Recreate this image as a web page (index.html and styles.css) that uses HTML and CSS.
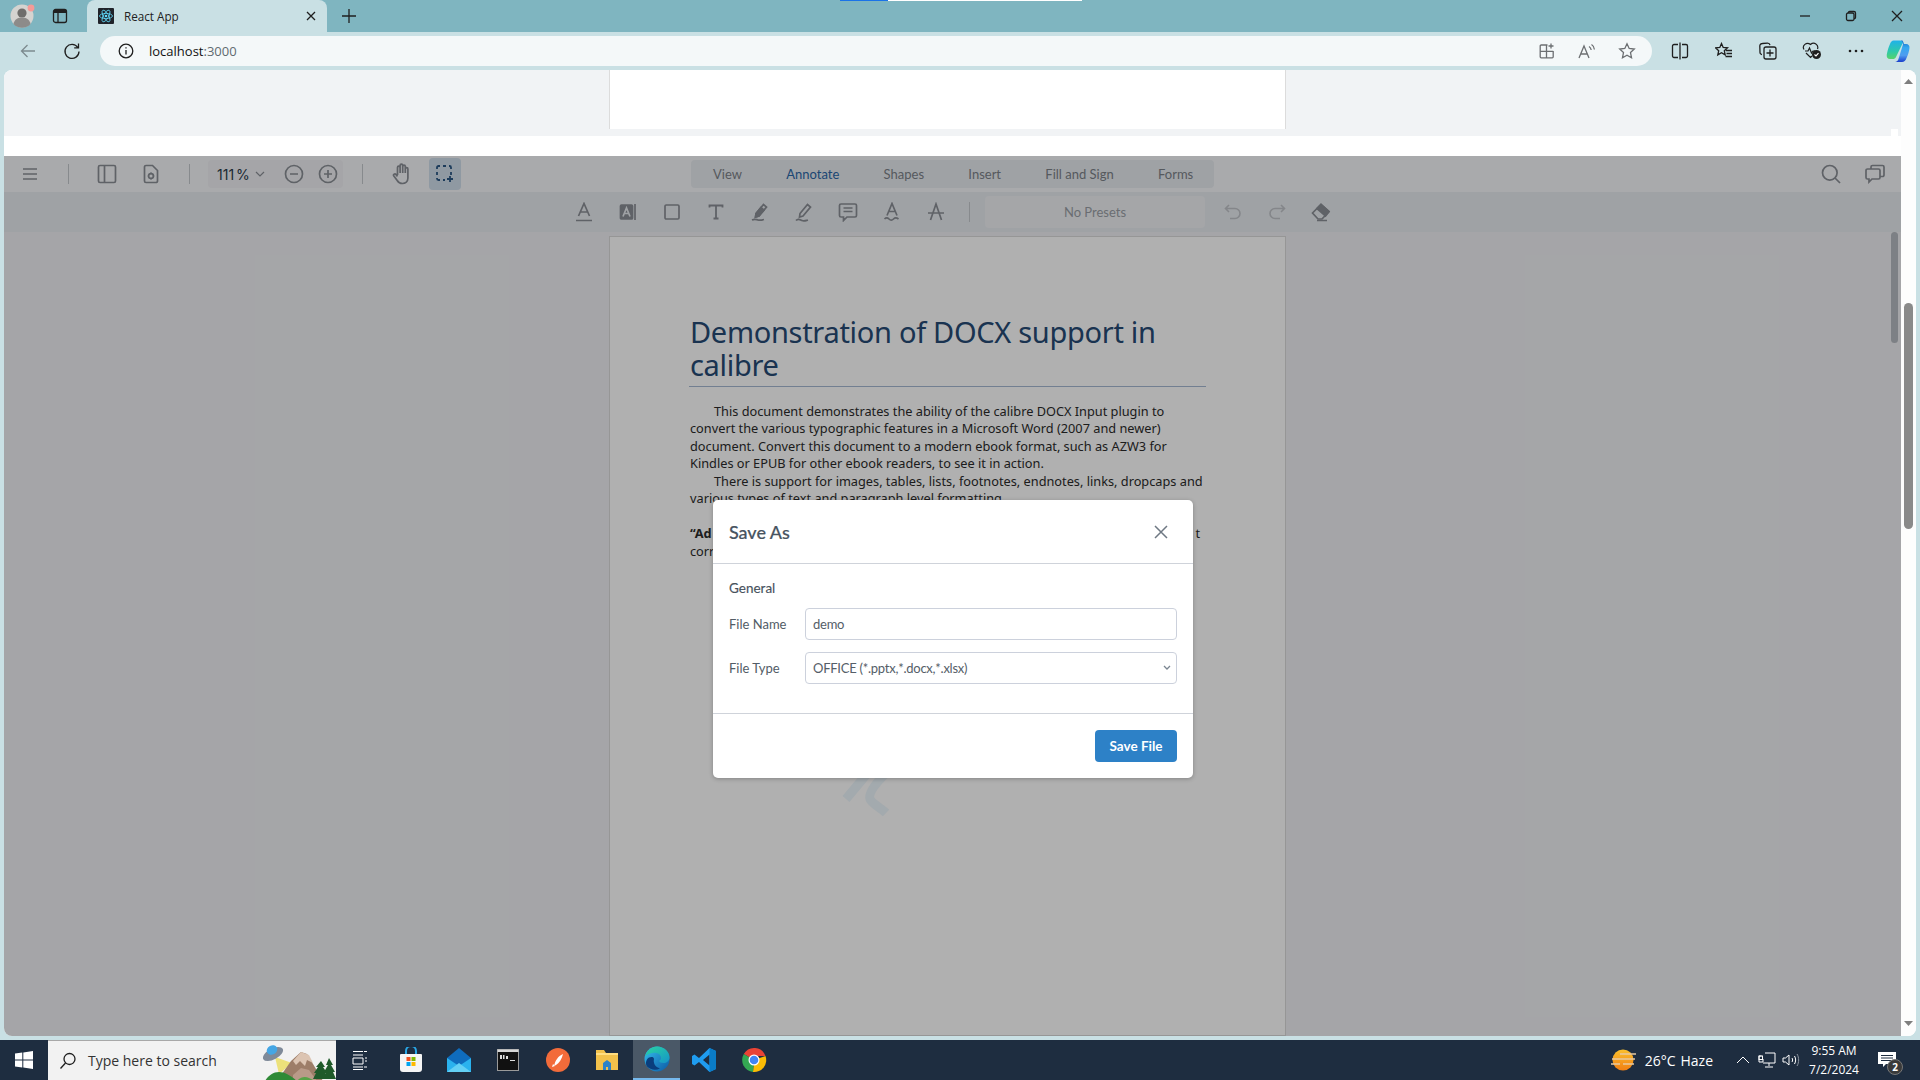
FILE: index.html
```html
<!DOCTYPE html>
<html lang="en">
<head>
<meta charset="utf-8">
<title>React App</title>
<link rel="stylesheet" href="styles.css">
</head>
<body>
<div class="capture"><span class="cap-blue"></span><span class="cap-white"></span></div>
<header class="tabbar">
  <div class="cell w44">
    <svg width="26" height="26" viewBox="0 0 26 26"><circle cx="13" cy="13" r="11.500" fill="#d5d3d0"/><circle cx="13" cy="10" r="4.600" fill="#6f6d6b"/><path d="M4.500 21c1-5 4.500-6.500 8.500-6.500s7.500 1.500 8.500 6.500c-2 2.500-5 3.800-8.500 3.800S6.500 23.500 4.500 21z" fill="#8d8b89"/><circle cx="22" cy="5" r="3.400" fill="#f59a97"/></svg>
  </div>
  <div class="cell w32">
    <svg class="ic dark" width="16" height="16" viewBox="0 0 16 16"><rect x="1.500" y="1.500" width="13" height="13" rx="2"/><path d="M6 5v9.500"/><path d="M2 2h12v3H2z" class="solid"/></svg>
  </div>
  <div class="tab">
    <svg class="favicon" width="16" height="16" viewBox="0 0 16 16"><rect width="16" height="16" rx="1" fill="#20232a"/><g fill="none" stroke="#61dafb" stroke-width=".8"><ellipse cx="8" cy="8" rx="6.500" ry="2.600"/><ellipse cx="8" cy="8" rx="6.500" ry="2.600" transform="rotate(60 8 8)"/><ellipse cx="8" cy="8" rx="6.500" ry="2.600" transform="rotate(120 8 8)"/></g><circle cx="8" cy="8" r="1.300" fill="#61dafb"/></svg>
    <span class="tab-title">React App</span>
    <svg class="ic dark tab-x" width="12" height="12" viewBox="0 0 12 12"><path d="M2 2l8 8M10 2l-8 8"/></svg>
  </div>
  <div class="cell w44">
    <svg class="ic dark" width="16" height="16" viewBox="0 0 16 16"><path d="M8 1v14M1 8h14"/></svg>
  </div>
  <div class="grow"></div>
  <div class="cell w46"><svg class="ic dark" width="12" height="12" viewBox="0 0 12 12"><path d="M1 6h10"/></svg></div>
  <div class="cell w46"><svg class="ic dark" width="12" height="12" viewBox="0 0 12 12"><rect x="1.500" y="3" width="7.500" height="7.500" rx="1.500"/><path d="M3.500 3V2.500a1 1 0 0 1 1-1H9a1.500 1.500 0 0 1 1.500 1.500v4.500a1 1 0 0 1-1 1H9"/></svg></div>
  <div class="cell w46"><svg class="ic dark" width="12" height="12" viewBox="0 0 12 12"><path d="M1 1l10 10M11 1L1 11"/></svg></div>
</header>

<nav class="urlbar">
  <div class="cell w44"><svg class="ic grey" width="18" height="18" viewBox="0 0 18 18"><path d="M16 9H2.500M8.500 3L2.500 9l6 6"/></svg></div>
  <div class="cell w44"><svg class="ic dark" width="18" height="18" viewBox="0 0 18 18"><path d="M14.800 5.500A7 7 0 1 0 16 9.500M15.500 1.500v4.300h-4.300"/></svg></div>
  <div class="address">
    <div class="cell w26"><svg class="ic dark" width="16" height="16" viewBox="0 0 16 16"><circle cx="8" cy="8" r="6.800"/><path d="M8 7v4.500M8 4.300v1.200"/></svg></div>
    <span class="url">localhost<span class="url-port">:3000</span></span>
    <div class="grow"></div>
    <div class="cell w40"><svg class="ic mid" width="16" height="16" viewBox="0 0 16 16"><path d="M8.500 2H2.200a1 1 0 0 0-1 1v10.800a1 1 0 0 0 1 1h11a1 1 0 0 0 1-1V8M1.200 8.300h13M7.500 2v12.800M12 .5v5M9.500 3h5"/></svg></div>
    <div class="cell w40"><svg class="ic mid" width="18" height="16" viewBox="0 0 18 16"><path d="M1 15L6 3l5 12M2.800 11h6.400M11 3.500c1.300.8 2 2 2.200 3.500M13.500 1.500c1.700 1 2.700 2.800 2.900 5"/></svg></div>
    <div class="cell w40"><svg class="ic mid" width="18" height="18" viewBox="0 0 18 18"><path d="M9 1.800l2.200 4.700 5.100.6-3.800 3.500 1 5.100L9 13.200l-4.500 2.500 1-5.100L1.700 7.100l5.100-.6z"/></svg></div>
  </div>
  <div class="cell w44"><svg class="ic dark" width="18" height="18" viewBox="0 0 18 18"><path d="M7 2.500H3a1.500 1.500 0 0 0-1.500 1.500v10A1.500 1.500 0 0 0 3 15.500h4M11 2.500h4A1.500 1.500 0 0 1 16.500 4v10a1.500 1.500 0 0 1-1.500 1.500h-4M9 .5v17"/></svg></div>
  <div class="cell w44"><svg class="ic dark" width="18" height="18" viewBox="0 0 18 18"><path d="M6.500 1.500l1.700 3.900 4.300.4-3.200 2.900.9 4.200-3.700-2.200-3.700 2.200.9-4.200L.5 5.800l4.300-.4zM11 8.500h6M11.500 11.500h5.500M10.500 14.500h6.500"/></svg></div>
  <div class="cell w44"><svg class="ic dark" width="18" height="18" viewBox="0 0 18 18"><path d="M3 12.500a2 2 0 0 1-2-2L.8 4a2.500 2.500 0 0 1 2.500-2.500l5.200-.3a2.500 2.500 0 0 1 2.500 2M7 5h8a2 2 0 0 1 2 2v8a2 2 0 0 1-2 2H7a2 2 0 0 1-2-2V7a2 2 0 0 1 2-2zM11 7.500v7M7.500 11h7"/></svg></div>
  <div class="cell w44"><svg width="20" height="18" viewBox="0 0 20 18"><path class="ic-line" d="M2 7.500C-.3 3.500 4.500-.5 8.500 2.500c3.500-3 8.500 0 7 4.500M3 9h3l1.500-3 2 5 1.500-2h2M4 11l4.500 4.500 1.500-1.500"/><circle cx="14.500" cy="12.500" r="4.500" fill="#1f1f1f"/><path class="ic-white" d="M12.500 12.500l1.500 1.500 2.500-2.800"/></svg></div>
  <div class="cell w44"><svg width="16" height="4" viewBox="0 0 16 4" fill="#1f1f1f"><circle cx="2" cy="2" r="1.300"/><circle cx="8" cy="2" r="1.300"/><circle cx="14" cy="2" r="1.300"/></svg></div>
  <div class="cell w40"><svg width="24" height="24" viewBox="0 0 24 24"><defs><linearGradient id="cpA" x1="0" y1="0" x2="0" y2="1"><stop offset="0" stop-color="#1fb2ea"/><stop offset=".6" stop-color="#2ec9a8"/><stop offset="1" stop-color="#58d36a"/></linearGradient><linearGradient id="cpB" x1="0" y1="0" x2="0" y2="1"><stop offset="0" stop-color="#1565c8"/><stop offset=".35" stop-color="#35a8ef"/><stop offset=".7" stop-color="#4f9cf0"/><stop offset="1" stop-color="#1a3fcc"/></linearGradient></defs><path d="M7.500 1.500H14c1.500 0 2.500.8 3 2L10 18c-.7 1.500-1.800 2-3 2H4C1.500 20 .3 18 .8 15.500 1.500 12 2.500 8 4 5c.8-2 2-3.500 3.500-3.500z" fill="url(#cpA)"/><path d="M14.500 1c1.500 0 2.500.8 3 2.500l.5 1.500h2c2.500 0 3.800 2 3.500 4-.4 3.500-1.500 7-3 10-.8 2.500-2.500 4-4.500 4H9c1.500 0 2.700-1 3.300-2.500L17 5.500C16.500 3 15.800 1.500 14.500 1z" fill="url(#cpB)"/></svg></div>
</nav>

<div class="frame">
  <main class="app">
    <section class="prev">
      <div class="prev-page"></div>
      <span class="notch"></span>
    </section>
    <div class="band"></div>
    <section class="viewer">
      <div class="tb1">
        <div class="cell w36"><svg class="ic tool" width="16" height="14" viewBox="0 0 16 14"><path d="M1 2h14M1 7h14M1 12h14"/></svg></div>
        <span class="vr vr-a"></span>
        <div class="cell w44 ml16"><svg class="ic tool" width="20" height="20" viewBox="0 0 20 20"><rect x="1.500" y="1.500" width="17" height="17" rx="1.500"/><path d="M7.500 1.500v17"/></svg></div>
        <div class="cell w44"><svg class="ic tool" width="18" height="20" viewBox="0 0 18 20"><path d="M10.500 1.500H4A1.500 1.500 0 0 0 2.500 3v14A1.500 1.500 0 0 0 4 18.500h10a1.500 1.500 0 0 0 1.500-1.500V6.500z"/><circle cx="9" cy="12" r="2.400"/><path d="M9 8.500v1M9 14.500v1M5.800 12h1M11.200 12h1"/></svg></div>
        <span class="vr vr-b"></span>
        <div class="zoomgroup">
          <span class="zoomval">111 %</span>
          <svg class="ic tool thin zoomchev" width="10" height="6" viewBox="0 0 10 6"><path d="M1 1l4 4 4-4"/></svg>
          <svg class="ic tool zoomminus" width="20" height="20" viewBox="0 0 20 20"><circle cx="10" cy="10" r="8.500"/><path d="M6 10h8"/></svg>
          <svg class="ic tool zoomplus" width="20" height="20" viewBox="0 0 20 20"><circle cx="10" cy="10" r="8.500"/><path d="M6 10h8M10 6v8"/></svg>
        </div>
        <span class="vr vr-c"></span>
        <div class="cell w32 ml23"><svg class="ic tool" width="20" height="22" viewBox="0 0 20 22"><path d="M5.500 12V4.500a1.300 1.300 0 0 1 2.600 0V10M8.100 9V2.500a1.300 1.300 0 0 1 2.600 0V10M10.700 9.500V3.500a1.300 1.300 0 0 1 2.600 0V10M13.300 10V6a1.300 1.300 0 0 1 2.600 0v9c0 3.500-2.500 5.500-5.500 5.500-2.500 0-4-1-5.200-3L1.700 12.800c-.8-1.300 1.200-2.600 2.200-1.400l1.600 2"/></svg></div>
        <div class="selbox"><svg class="ic sel" width="18" height="18" viewBox="0 0 18 18"><path d="M1 4V2.500A1.500 1.500 0 0 1 2.500 1H4M7 1h3M13 1h.5A1.500 1.500 0 0 1 15 2.500V4M15 7v3M1 7v3M1 13v.5A1.500 1.500 0 0 0 2.500 15H4M7 15h2M14 11v6M11 14h6" stroke-width="1.800"/></svg></div>
        <div class="tabs">
          <span class="tabitem">View</span>
          <span class="tabitem active">Annotate</span>
          <span class="tabitem">Shapes</span>
          <span class="tabitem">Insert</span>
          <span class="tabitem">Fill and Sign</span>
          <span class="tabitem">Forms</span>
        </div>
        <div class="grow"></div>
        <div class="cell w44"><svg class="ic tool" width="20" height="20" viewBox="0 0 20 20"><circle cx="8.800" cy="8.800" r="7.300"/><path d="M14 14l5 5"/></svg></div>
        <div class="cell w44"><svg class="ic tool" width="20" height="20" viewBox="0 0 20 20"><path d="M6 5V3a1.500 1.500 0 0 1 1.500-1.500h10A1.500 1.500 0 0 1 19 3v8a1.500 1.500 0 0 1-1.500 1.500H15"/><path d="M2.500 5h11A1.500 1.500 0 0 1 15 6.500v7a1.500 1.500 0 0 1-1.500 1.500H7l-3 3v-3H2.500A1.500 1.500 0 0 1 1 13.500v-7A1.500 1.500 0 0 1 2.500 5z"/></svg></div>
      </div>
      <div class="tb2">
        <div class="cell w44"><svg class="ic tool" width="18" height="20" viewBox="0 0 18 20"><path d="M3.500 14L9 1.500 14.500 14M5.200 10h7.600"/><path d="M1 18.500h16"/></svg></div>
        <div class="cell w44"><svg class="ic tool" width="18" height="20" viewBox="0 0 18 20"><rect class="toolfill" x="1.500" y="3" width="12" height="14" rx="1"/><path class="ic-cut" d="M4 14.500L7.500 6l3.500 8.500M5.200 11.500h4.600"/><path d="M16 2v16"/></svg></div>
        <div class="cell w44"><svg class="ic tool" width="18" height="18" viewBox="0 0 18 18"><rect x="2" y="2" width="14" height="14" rx="1.200"/></svg></div>
        <div class="cell w44"><svg class="ic tool" width="18" height="18" viewBox="0 0 18 18"><path d="M2.500 4.500V2.500h13v2M9 2.500v13M6.500 15.500h5" stroke-width="1.800"/></svg></div>
        <div class="cell w44"><svg class="ic tool" width="20" height="20" viewBox="0 0 20 20"><path d="M6 11.500L13.500 2.500l3 2.500-7.500 9-3.500 1zM2 18c3-1.500 4-.5 6 0s4 0 6-.5"/><path class="toolfill" d="M6 11.500l5-6 3 2.500-5 6-3.500 1z"/></svg></div>
        <div class="cell w44"><svg class="ic tool" width="20" height="20" viewBox="0 0 20 20"><path d="M6 11.500L13.500 2.500l3 2.500-7.500 9-3.500 1zM2 18.500c2-2.500 4-1 6 0s4 0 6-.5"/></svg></div>
        <div class="cell w44"><svg class="ic tool" width="20" height="20" viewBox="0 0 20 20"><path d="M3 2h14a1.500 1.500 0 0 1 1.500 1.500v10A1.500 1.500 0 0 1 17 15H9l-3.500 3.500V15H3a1.500 1.500 0 0 1-1.500-1.500v-10A1.500 1.500 0 0 1 3 2zM5.500 6h9M5.500 9.500h9"/></svg></div>
        <div class="cell w44"><svg class="ic tool" width="18" height="20" viewBox="0 0 18 20"><path d="M4 13.500L9 1.500l5 12M5.700 9.500h6.600M1.500 17c1.500-1.500 3-1.500 4.500 0s3 1.500 4.500 0 3-1.500 5 0"/></svg></div>
        <div class="cell w44"><svg class="ic tool" width="18" height="20" viewBox="0 0 18 20"><path d="M3.500 18L9 2l5.500 16M1 11h16"/></svg></div>
        <span class="vr vr-d"></span>
        <div class="presets">No Presets</div>
        <div class="cell w44 ml6"><svg class="ic faint" width="18" height="16" viewBox="0 0 18 16"><path d="M5 1L1.500 4.500 5 8M1.500 4.500H11a5 5 0 0 1 0 10H6"/></svg></div>
        <div class="cell w44"><svg class="ic faint" width="18" height="16" viewBox="0 0 18 16"><path d="M13 1l3.500 3.500L13 8M16.500 4.500H7a5 5 0 0 0 0 10h5"/></svg></div>
        <div class="cell w44"><svg class="ic tool" width="20" height="20" viewBox="0 0 20 20"><path d="M1.500 11L10 2.500l8 7-7 7.500H7z"/><path class="toolfill" d="M6 6.500L14.500 14l3.500-4.500-8-7z"/><path d="M6 18.500h10"/></svg></div>
      </div>
      <div class="doc">
        <article class="page">
          <h1 class="doc-title">Demonstration of DOCX support in<br>calibre</h1>
          <div class="doc-rule"></div>
          <div class="doc-text">
            <p class="ln indent">This document demonstrates the ability of the calibre DOCX Input plugin to</p>
            <p class="ln">convert the various typographic features in a Microsoft Word (2007 and newer)</p>
            <p class="ln">document. Convert this document to a modern ebook format, such as AZW3 for</p>
            <p class="ln">Kindles or EPUB for other ebook readers, to see it in action.</p>
            <p class="ln indent">There is support for images, tables, lists, footnotes, endnotes, links, dropcaps and</p>
            <p class="ln">various types of text and paragraph level formatting.</p>
            <p class="ln split gap"><b>“Ad</b><span>t</span></p>
            <p class="ln">corr</p>
          </div>
          <svg class="mark" width="80" height="60" viewBox="0 0 80 60"><path d="M8 34L28 10"/><path d="M48 8C38 18 30 28 32 34c2 5 10 8 16 14"/></svg>
        </article>
        <span class="inner-thumb"></span>
      </div>
      <div class="overlay">
        <div class="modal">
          <div class="modal-head">
            <span class="modal-title">Save As</span>
            <svg class="ic modal-x" width="14" height="14" viewBox="0 0 14 14"><path d="M1 1l12 12M13 1L1 13"/></svg>
          </div>
          <div class="modal-body">
            <div class="sect">General</div>
            <div class="row"><label class="lab">File Name</label><div class="field">demo</div></div>
            <div class="row"><label class="lab">File Type</label><div class="field">OFFICE (*.pptx,*.docx,*.xlsx)<svg class="ic chev" width="8" height="5" viewBox="0 0 8 5"><path d="M1 1l3 3 3-3"/></svg></div></div>
          </div>
          <div class="modal-foot"><button class="save">Save File</button></div>
        </div>
      </div>
    </section>
  </main>
  <aside class="outer-scroll">
    <svg class="arrow" width="9" height="5" viewBox="0 0 9 5"><path d="M4.500 0L9 5H0z"/></svg>
    <span class="outer-track"><span class="outer-thumb"></span></span>
    <svg class="arrow" width="9" height="5" viewBox="0 0 9 5"><path d="M0 0h9L4.500 5z"/></svg>
  </aside>
</div>

<footer class="taskbar">
  <div class="cell w48"><svg width="18" height="18" viewBox="0 0 18 18" fill="#fff"><path d="M0 2.600L7.300 1.500v7H0zM8.300 1.400L18 0v8.500H8.300zM0 9.500h7.300v7L0 15.400zM8.300 9.500H18V18l-9.700-1.400z"/></svg></div>
  <div class="search">
    <svg class="ic dark search-ic" width="18" height="18" viewBox="0 0 18 18"><circle cx="10.500" cy="7" r="5.500"/><path d="M6.500 11L1.500 16.500"/></svg>
    <span class="search-text">Type here to search</span>
    <svg class="scene" width="73" height="40" viewBox="0 0 73 40"><path d="M12 16L16 33 29 22z" fill="#ece17a"/><ellipse cx="10" cy="13" rx="11" ry="5.500" transform="rotate(-28 10 13)" fill="#7f8a99"/><ellipse cx="9" cy="9" rx="5.500" ry="4.500" transform="rotate(-28 9 9)" fill="#45a6e4"/><path d="M14 40L28 20 38 11l6 2 12 20 4 7z" fill="#9d7d68"/><path d="M30 20l8-9 8 3 4 8-6-3-2 6-5-5-4 4z" fill="#dcc4b2"/><path d="M30 34l8-7 8 2 8 11H30z" fill="#b99a88"/><path d="M2 40c3-5 8-9 14-9 6 0 12 4 18 9z" fill="#2f8a36"/><path d="M34 40c3-4 8-5 12-3l6 3z" fill="#57a347"/><path d="M58 20l4 6h-2l4 6h-2l3 6H50l3-6h-2l4-6h-2zM66 17l4 7h-2l4 7h-2l3 7H60l3-7h-2l4-7h-2z" fill="#1f5a2a"/></svg>
  </div>
  <div class="cell w48"><svg class="ic white" width="18" height="20" viewBox="0 0 18 20"><path d="M2 1.500h10M13 1.500h3M2 5h10M2 8h10v6H2zM14 8h2M14 11h2M2 17h10M13 17h3M2 19.500h10"/></svg></div>
  <div class="cell w48 ml3"><svg width="24" height="26" viewBox="0 0 24 26"><path d="M7 7V4a5 5 0 0 1 10 0v3" fill="none" stroke="#29a8e8" stroke-width="2"/><path d="M2 7h20a1 1 0 0 1 1 1v14a3 3 0 0 1-3 3H4a3 3 0 0 1-3-3V8a1 1 0 0 1 1-1z" fill="#f5f5f5"/><rect x="7.500" y="10" width="4" height="4" fill="#f25022"/><rect x="12.500" y="10" width="4" height="4" fill="#7fba00"/><rect x="7.500" y="15" width="4" height="4" fill="#00a4ef"/><rect x="12.500" y="15" width="4" height="4" fill="#ffb900"/></svg></div>
  <div class="cell w48"><svg width="24" height="24" viewBox="0 0 24 24"><path d="M12 0L24 10v14H0V10z" fill="#0f6cbd"/><path d="M0 10l12 8 12-8v14H0z" fill="#2ab2ee"/><path d="M0 24l12-9 12 9z" fill="#63d0f5"/></svg></div>
  <div class="cell w50"><svg width="22" height="22" viewBox="0 0 22 22"><rect x=".5" y=".5" width="21" height="21" fill="#111" stroke="#9a9a9a"/><rect x=".5" y=".5" width="21" height="2.500" fill="#d6d6d6"/><path d="M3 6h2v4H3zM6 6h1.500v4H6zM9 7h2v3H9zM13 11h5v1h-5z" fill="#ddd"/></svg></div>
  <div class="cell w50"><svg width="24" height="24" viewBox="0 0 24 24"><circle cx="12" cy="12" r="12" fill="#f26b3a"/><path d="M8 18c1-5 4-10 9-12-1 5-4 9-7 11zM7 16l-1 3 3-1" fill="#fff"/></svg></div>
  <div class="cell w48"><svg width="24" height="20" viewBox="0 0 24 20"><path d="M1 0h8l2 3h12v17H1z" fill="#f2c14b"/><path d="M1 3h22v2H1z" fill="#ffdd80"/><path d="M8 20v-7l4-3 4 3v7h-3v-3h-2v3z" fill="#2a82c9"/></svg></div>
  <div class="cell tb-on">
    <svg width="26" height="26" viewBox="0 0 26 26"><defs><linearGradient id="edA" x1="0" y1="0" x2="1" y2="1"><stop offset="0" stop-color="#35c1f1"/><stop offset="1" stop-color="#0c59a4"/></linearGradient><linearGradient id="edB" x1="0" y1="0" x2="1" y2="1"><stop offset="0" stop-color="#2ad6a0"/><stop offset="1" stop-color="#1593c9"/></linearGradient></defs><circle cx="13" cy="13" r="12.500" fill="url(#edA)"/><path d="M1 11C3 4 8 .5 13 .5c7 0 12.500 5 12.500 11 0 3.500-3 5.500-6 5.500-2.500 0-4-1-4.500-2 2-1 2.500-3 1.500-5-1.500-3-6-4-10-2.500-3 1-5 2-5.500 3.500z" fill="url(#edB)"/><path d="M10 13c-1 4 1 8 6 9.500-5 2.500-10 1-13-2-2-3-1-7 2-9 2-1 5-1 5 1.500z" fill="#0a3e7d"/></svg>
  </div>
  <div class="cell w48"><svg width="24" height="24" viewBox="0 0 24 24"><path d="M17.500 0L24 3v18l-6.500 3L7 14l-4.500 3.500L0 16V8l2.500-1.500L7 10zM17.500 6.500L11 12l6.500 5.500z" fill="#1f9cf0"/><path d="M17.500 0L24 3v18l-6.500 3z" fill="#0a7cc7"/></svg></div>
  <div class="cell w52"><svg width="26" height="26" viewBox="0 0 26 26"><path d="M13 13L2.800 7A12 12 0 0 1 24.500 9H13z" fill="#ea4335"/><path d="M13 13l11.500-4A12 12 0 0 1 12 25z" fill="#fbbc05"/><path d="M13 13l-1 12A12 12 0 0 1 2.800 7z" fill="#34a853"/><circle cx="13" cy="13" r="5.500" fill="#fff"/><circle cx="13" cy="13" r="4.300" fill="#4285f4"/></svg></div>
  <div class="grow"></div>
  <svg class="sun" width="26" height="22" viewBox="0 0 26 22"><defs><linearGradient id="sunG" x1="0" y1="0" x2="0" y2="1"><stop offset="0" stop-color="#fbc02d"/><stop offset="1" stop-color="#f07f13"/></linearGradient></defs><circle cx="12" cy="11" r="10.500" fill="url(#sunG)"/><path d="M9 5h16M1 10h17M14 10h10M0 15h9M12 15h11" stroke="#e8c9a0" stroke-width="1.600"/></svg>
  <span class="temp">26°C</span>
  <span class="haze">Haze</span>
  <svg class="ic white tray-chev" width="14" height="8" viewBox="0 0 14 8"><path d="M1 7l6-6 6 6"/></svg>
  <svg class="ic white tray-net" width="18" height="16" viewBox="0 0 18 16"><path d="M3.500 4H1v6h4V7M7 1h10v10H5M11 11v3M7 15h8"/><rect x="1" y="4" width="3.500" height="3.500"/></svg>
  <svg class="ic white tray-vol" width="18" height="14" viewBox="0 0 18 14"><path d="M1 5h2.500L7 2v10L3.500 9H1zM10 5c.8 1.200.8 2.800 0 4M12.500 3c1.500 2.500 1.500 5.500 0 8"/><path class="dimline" d="M15 1c2.200 3.500 2.200 8.500 0 12"/></svg>
  <div class="clock"><span>9:55 AM</span><span>7/2/2024</span></div>
  <div class="notif">
    <svg width="18" height="16" viewBox="0 0 18 16" fill="#fff"><path d="M0 0h18v12H8l-3 3v-3H0z"/><path d="M3 3.500h12M3 6h12M3 8.500h12" stroke="#1e2d40"/></svg>
    <span class="badge">2</span>
  </div>
</footer>
</body>
</html>
```

FILE: styles.css
```css
* { box-sizing: border-box; }
html, body { margin: 0; height: 100%; }
body {
  width: 1920px; height: 1080px; overflow: hidden; display: flex; flex-direction: column;
  background: #c9e0e4; font-family: "Open Sans", "Noto Sans", sans-serif; color: #1f1f1f; position: relative;
}
.capture { position: absolute; left: 840px; top: 0; display: flex; height: 1px; z-index: 5; }
.cap-blue { width: 48px; background: #1a73e8; }
.cap-white { width: 194px; background: #fff; }

.cell { display: flex; align-items: center; justify-content: center; flex: none; height: 100%; }
.w26 { width: 26px; } .w32 { width: 32px; } .w36 { width: 36px; } .w40 { width: 40px; }
.w44 { width: 44px; } .w46 { width: 46px; } .w48 { width: 48px; } .w50 { width: 50px; } .w52 { width: 52px; }
.ml3 { margin-left: 3px; } .ml6 { margin-left: 6px; } .ml16 { margin-left: 16px; } .ml23 { margin-left: 23px; }
.grow { flex: 1; }

.ic { fill: none; stroke: currentColor; stroke-width: 1.300; }
.dark { color: #1f1f1f; } .grey { color: #7c8a8e; } .mid { color: #6c6f72; } .white { color: #fff; stroke-width: 1; }
.tool { color: #8a8e95; stroke-width: 1.700; }
.thin { stroke-width: 1.200; }
.faint { color: #bfc3c8; stroke-width: 1.600; }
.sel { color: #2a5785; }
.solid { fill: #1f1f1f; stroke: none; }
.toolfill { fill: #8a8e95; }
.ic-line { fill: none; stroke: #1f1f1f; stroke-width: 1.200; }
.ic-white { fill: none; stroke: #fff; stroke-width: 1.200; }
.ic-cut { stroke: #e7ebef; fill: none; }
.dimline { stroke: #8b94a0; }

.tabbar { height: 32px; background: #7fb5c0; display: flex; flex: none; }
.tab {
  width: 240px; margin-left: 11px; background: #c9e0e4; border-radius: 8px 8px 0 0;
  display: flex; align-items: center; padding-left: 11px; padding-right: 10px;
}
.favicon { flex: none; }
.tab-title { margin-left: 10px; font-size: 11.700px; color: #222; }
.tab-x { margin-left: auto; }

.urlbar { height: 38px; display: flex; padding: 0 2px 0 6px; flex: none; }
.address {
  flex: 1; height: 30px; margin: 4px 6px 0 6px; background: #f4f8f9; border-radius: 15px;
  display: flex; align-items: center; padding: 0 5px 0 13px;
}
.url { margin-left: 10px; font-size: 13px; color: #111; }
.url-port { color: #5f6b70; }

.frame { height: 966px; margin: 0 4px 4px; flex: none; display: flex; border-radius: 8px; overflow: hidden; background: #fff; }
.app { width: 1897px; display: flex; flex-direction: column; flex: none; }
.prev { height: 66px; background: #f1f3f5; flex: none; position: relative; }
.prev-page { width: 677px; height: 59px; margin-left: 605px; background: #fff; border: solid #dcdcdc; border-width: 0 1px; }
.notch { position: absolute; right: 3px; bottom: 0; width: 7px; height: 7px; background: #fff; }
.band { height: 20px; background: #fff; flex: none; }

.viewer { flex: 1; position: relative; display: flex; flex-direction: column; min-height: 0; }
.tb1 { height: 36px; background: #f5f6f9; display: flex; align-items: center; padding: 0 4px 0 8px; flex: none; }
.vr { width: 1px; height: 20px; background: #c4c8cc; flex: none; }
.vr-a { margin-left: 20px; }
.vr-b { margin-left: 16px; }
.vr-c { margin-left: 19px; }
.vr-d { margin-left: 11px; }
.zoomgroup {
  width: 135px; height: 28px; margin-left: 18px; background: #eff0f3; border-radius: 4px;
  display: flex; align-items: center; padding-left: 9px; flex: none;
}
.zoomval { font: 14px "Inter", sans-serif; color: #2b3a4a; width: 34px; white-space: nowrap; word-spacing: -2px; }
.zoomchev { margin-left: 4px; }
.zoomminus { margin-left: 19px; }
.zoomplus { margin-left: 14px; }
.selbox { width: 32px; height: 32px; margin-left: 11px; background: #cfdeeb; border-radius: 4px; display: flex; align-items: center; justify-content: center; flex: none; }
.tabs {
  width: 523px; height: 28px; margin-left: 230px; background: #e7ebef; border-radius: 4px;
  display: flex; align-items: center; padding: 0 0 0 22px; gap: 44.300px; flex: none;
  font: 13px "Lato", sans-serif;
}
.tabitem { white-space: nowrap; color: #7c8288; }
.active { color: #2a67a8; }
.tb2 { height: 40px; background: #e7ebef; display: flex; align-items: center; padding-left: 558px; flex: none; }
.presets {
  width: 220px; height: 32px; margin-left: 15px; background: #eff1f4; border-radius: 4px; padding-bottom: 1px;
  display: flex; align-items: center; justify-content: center; flex: none;
  font: 13px "Lato", sans-serif; color: #9a9fa6;
}

.doc { flex: 1; background: #eff0f3; padding: 4px 0 0 605px; position: relative; overflow: hidden; min-height: 0; }
.page { width: 677px; height: 800px; background: #fff; border: 1px solid #dadada; padding: 0 79px 0 80px; position: relative; }
.doc-title {
  margin: 78px 0 0; font: 400 29px/33px "Noto Sans", sans-serif; color: #264a75; white-space: nowrap; letter-spacing: -.3px;
}
.doc-rule { height: 1px; background: #a6b8d2; margin: 5px 0 0 -1px; width: 517px; }
.doc-text { margin-top: 16px; font: 12.750px/17.400px "Noto Sans", sans-serif; color: #2b2b2b; }
.ln { margin: 0; white-space: nowrap; height: 17.400px; }
.indent { text-indent: 24px; }
.split { display: flex; justify-content: space-between; width: 510px; }
.gap { margin-top: 18px; }
.mark { position: absolute; left: 228px; top: 528px; fill: none; stroke: #ecf6fc; stroke-width: 9; }
.inner-thumb { position: absolute; right: 3px; top: 0; width: 7px; height: 111px; background: #b5bac1; border-radius: 4px; }

.overlay { position: absolute; inset: 0; background: rgba(0, 0, 0, .31); z-index: 2; }
.modal {
  position: absolute; left: 709px; top: 344px; width: 480px; height: 278px; background: #fff;
  border-radius: 5px; box-shadow: 0 1px 4px rgba(0,0,0,.25); display: flex; flex-direction: column;
  font-family: "Lato", sans-serif; color: #48525d;
}
.modal-head { height: 64px; border-bottom: 1px solid #cfd3da; display: flex; align-items: center; justify-content: space-between; padding: 0 25px 0 16px; flex: none; }
.modal-title { font-size: 18px; font-weight: 500; color: #485461; letter-spacing: -.05px; -webkit-text-stroke: .2px #485461; }
.modal-x { color: #6e7883; stroke-width: 1.500; }
.modal-body { height: 150px; border-bottom: 1px solid #cfd3da; padding: 15px 16px 0; flex: none; }
.sect { font-size: 13.500px; line-height: 18px; margin-bottom: 11px; -webkit-text-stroke: .15px #48525d; }
.row { display: flex; align-items: center; height: 32px; margin-bottom: 12px; }
.lab { width: 76px; font-size: 13px; color: #525c66; flex: none; padding-bottom: 1px; }
.field {
  width: 372px; height: 32px; border: 1px solid #ccd1dc; border-radius: 4px; padding: 0 5px 1px 7px;
  font-size: 13px; letter-spacing: -.25px; color: #555e68; display: flex; align-items: center; justify-content: space-between;
}
.chev { color: #7a8590; }
.modal-foot { flex: 1; display: flex; align-items: flex-start; justify-content: flex-end; padding: 16px 16px 0; }
.save {
  width: 82px; height: 32px; background: #2d81c7; color: #fff; border: 0; border-radius: 4px; padding: 0 0 1px;
  font: 700 13.500px "Lato", sans-serif;
}

.outer-scroll { width: 15px; background: #fdfdfd; display: flex; flex-direction: column; align-items: center; padding: 9px 0 10px; flex: none; }
.arrow { fill: #7e7e7e; flex: none; }
.outer-track { flex: 1; width: 9px; padding-top: 219px; }
.outer-thumb { display: block; width: 9px; height: 226px; background: #8a8a8a; border-radius: 5px; }

.taskbar { height: 40px; background: #1e2d40; display: flex; align-items: center; flex: none; color: #fff; }
.search { width: 288px; height: 40px; background: #f2f2f2; border-top: 1px solid #a8a8a8; display: flex; align-items: center; padding-left: 11px; flex: none; position: relative; overflow: hidden; }
.search-text { margin-left: 11px; font-size: 14px; color: #333; white-space: nowrap; }
.scene { position: absolute; right: 0; top: 0; }
.tb-on { width: 47px; height: 40px; margin-left: 2px; background: #4a5867; border-bottom: 2px solid #76b9ed; }
.sun { flex: none; }
.temp { margin-left: 8px; font-size: 14px; white-space: nowrap; }
.haze { margin-left: 5px; font-size: 14px; }
.tray-chev { margin-left: 23px; flex: none; }
.tray-net { margin-left: 8px; flex: none; }
.tray-vol { margin-left: 6px; flex: none; }
.clock { width: 72px; margin-left: -2px; display: flex; flex-direction: column; align-items: center; font-size: 12px; line-height: 19px; }
.notif { width: 34px; margin-right: 16px; display: flex; justify-content: center; position: relative; flex: none; }
.badge { position: absolute; left: 17px; top: 7px; width: 16px; height: 16px; border-radius: 50%; background: #3a3a3a; border: 1px solid #777; font-size: 10px; font-weight: 700; display: flex; align-items: center; justify-content: center; }
```
